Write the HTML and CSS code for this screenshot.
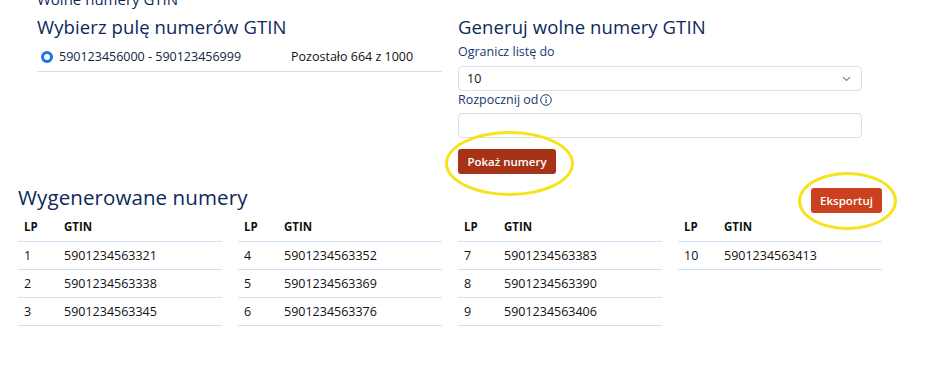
FILE: index.html
```html
<!DOCTYPE html>
<html lang="pl">
<head>
<meta charset="utf-8">
<title>Wolne numery GTIN</title>
<link rel="stylesheet" href="styles.css">
</head>
<body>
<div class="page">
  <div class="crumb">Wolne numery GTIN</div>
  <div class="top">
    <section class="pool">
      <h2 class="title">Wybierz pulę numerów GTIN</h2>
      <div class="pool-row">
        <span class="radio"></span>
        <span class="range">590123456000 - 590123456999</span>
        <span class="left">Pozostało 664 z 1000</span>
      </div>
    </section>
    <section class="gen">
      <h2 class="title">Generuj wolne numery GTIN</h2>
      <label class="lbl">Ogranicz listę do</label>
      <div class="select"><span>10</span>
        <svg class="chev" width="9" height="6" viewBox="0 0 9 6"><path d="M1 1.2 L4.5 4.5 L8 1.2" fill="none" stroke="#7a7f88" stroke-width="1.1"/></svg>
      </div>
      <label class="lbl lbl2">Rozpocznij od<svg class="info" width="12" height="12" viewBox="0 0 12 12"><circle cx="6" cy="6" r="5.3" fill="none" stroke="#1d3f7a" stroke-width="1"/><rect x="5.5" y="5" width="1.1" height="4" fill="#1d3f7a"/><circle cx="6.05" cy="3.5" r="0.7" fill="#1d3f7a"/></svg></label>
      <div class="input"></div>
      <div class="btn-wrap"><button class="btn btn-dark">Pokaż numery</button><span class="ring ring-a"></span></div>
    </section>
  </div>
  <div class="gen-head">
    <h2 class="title">Wygenerowane numery</h2>
    <div class="btn-wrap"><button class="btn btn-light">Eksportuj</button><span class="ring ring-b"></span></div>
  </div>
  <div class="tables">
    <table>
      <thead><tr><th class="lp">LP</th><th>GTIN</th></tr></thead>
      <tbody>
        <tr><td class="lp">1</td><td>5901234563321</td></tr>
        <tr><td class="lp">2</td><td>5901234563338</td></tr>
        <tr><td class="lp">3</td><td>5901234563345</td></tr>
      </tbody>
    </table>
    <table>
      <thead><tr><th class="lp">LP</th><th>GTIN</th></tr></thead>
      <tbody>
        <tr><td class="lp">4</td><td>5901234563352</td></tr>
        <tr><td class="lp">5</td><td>5901234563369</td></tr>
        <tr><td class="lp">6</td><td>5901234563376</td></tr>
      </tbody>
    </table>
    <table>
      <thead><tr><th class="lp">LP</th><th>GTIN</th></tr></thead>
      <tbody>
        <tr><td class="lp">7</td><td>5901234563383</td></tr>
        <tr><td class="lp">8</td><td>5901234563390</td></tr>
        <tr><td class="lp">9</td><td>5901234563406</td></tr>
      </tbody>
    </table>
    <table>
      <thead><tr><th class="lp">LP</th><th>GTIN</th></tr></thead>
      <tbody>
        <tr><td class="lp">10</td><td>5901234563413</td></tr>
      </tbody>
    </table>
  </div>
</div>
</body>
</html>
```
FILE: styles.css
```css
* { box-sizing: border-box; }
html, body { margin: 0; padding: 0; background: #fff; }
body {
  font-family: "Open Sans", "Liberation Sans", sans-serif;
  color: #111;
  overflow: hidden;
}
.page {
  width: 942px;
  height: 384px;
  padding: 0 0 0 18px;
}
.crumb {
  margin: -11px 0 0 19px;
  font-size: 15px;
  line-height: 20px;
  color: #0b2a5b;
}
.top {
  display: grid;
  grid-template-columns: 405px 404px;
  column-gap: 16px;
  margin-left: 19px;
}
.title {
  margin: 0;
  font-size: 18.5px;
  font-weight: 500;
  line-height: 24px;
  color: #0b2a5b;
  letter-spacing: 0.1px;
}
.pool .title, .gen .title { margin-top: 6px; }
.pool-row {
  display: flex;
  align-items: center;
  height: 30px;
  margin-top: 3px;
  padding-left: 4px;
  border-bottom: 1px solid #cfe0f7;
  font-size: 12.5px;
  font-weight: 500;
}
.radio {
  width: 12px;
  height: 12px;
  border-radius: 50%;
  border: 3.5px solid #1a73e8;
  background: #fff;
  flex: none;
}
.range { margin-left: 6px; color: #0d1f3d; }
.left { margin-left: 50px; color: #111; }
.lbl {
  display: flex;
  align-items: center;
  font-size: 12.5px;
  font-weight: 500;
  color: #163a6e;
  line-height: 16px;
  margin-top: 5px;
}
.lbl2 { margin-top: 1px; }
.gen .select { margin-top: 6px; }
.select, .input {
  height: 25px;
  border: 1px solid #dcdfe4;
  border-radius: 4px;
  background: #fff;
}
.select {
  display: flex;
  align-items: center;
  justify-content: space-between;
  padding: 0 10px 0 8px;
  font-size: 12.5px;
  font-weight: 500;
  color: #111;
}
.input { margin-top: 5px; }
.info { margin-left: 1px; }
.btn-wrap { position: relative; display: flex; }
.gen .btn-wrap { margin-top: 11px; }
.btn {
  border: 0;
  border-radius: 3px;
  color: #fff;
  font-family: inherit;
  font-size: 11.5px;
  font-weight: 600;
  height: 25px;
  padding: 0;
  white-space: nowrap;
}
.btn-dark { background: #a63318; width: 98px; }
.btn-light { background: #cb411f; width: 71px; }
.ring {
  position: absolute;
  border: 3px solid #f7e31a;
  border-radius: 50%;
  pointer-events: none;
}
.ring-a { left: -13px; top: -18px; width: 129px; height: 65px; }
.ring-b { left: -13px; top: -16px; width: 99px; height: 58px; }
.gen-head {
  display: flex;
  justify-content: space-between;
  align-items: flex-end;
  width: 864px;
  margin-top: 11px;
}
.gen-head .title { font-size: 20.5px; line-height: 24px; margin-bottom: 4px; }
.tables {
  display: grid;
  grid-template-columns: repeat(4, 204px);
  column-gap: 16px;
  align-items: start;
}
table {
  border-collapse: collapse;
  width: 204px;
}
th, td {
  text-align: left;
  padding: 0 0 0 6px;
  height: 28px;
  border-bottom: 1px solid #cfe0f7;
  font-size: 12.5px;
  color: #111;
}
th { font-weight: 700; font-size: 11.5px; }
td { font-weight: 500; }
.lp { width: 40px; }
```
